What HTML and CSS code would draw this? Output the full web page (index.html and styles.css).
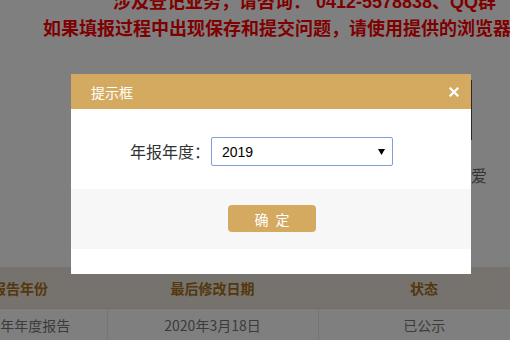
FILE: index.html
```html
<!DOCTYPE html>
<html lang="zh-CN">
<head>
<meta charset="utf-8">
<title>年报</title>
<link rel="stylesheet" href="styles.css">
</head>
<body>
<div class="page">
  <div class="notice">
    <p class="notice-line line-1">涉及登记业务，请咨询： 0412-5578838、QQ群</p>
    <p class="notice-line line-2">如果填报过程中出现保存和提交问题，请使用提供的浏览器</p>
  </div>
  <div class="middle">
    <div class="frame"></div>
    <p class="tagline">热爱</p>
  </div>
  <table class="report-table">
    <colgroup>
      <col class="col-year">
      <col class="col-date">
      <col class="col-state">
    </colgroup>
    <thead>
      <tr><th>报告年份</th><th>最后修改日期</th><th>状态</th></tr>
    </thead>
    <tbody>
      <tr><td>2019年年度报告</td><td>2020年3月18日</td><td>已公示</td></tr>
    </tbody>
  </table>
</div>

<div class="overlay"></div>

<div class="dialog">
  <div class="dialog-header">
    <span class="dialog-title">提示框</span>
    <span class="dialog-close">
      <svg width="10" height="10" viewBox="0 0 10 10"><path d="M1.5 1.5 L8.5 8.5 M8.5 1.5 L1.5 8.5" stroke="#fff" stroke-width="2.2" stroke-linecap="square"/></svg>
    </span>
  </div>
  <div class="dialog-body">
    <label class="field-label" for="year">年报年度：</label>
    <span class="select-wrap">
      <select id="year" class="year-select">
        <option>2019</option>
      </select>
      <svg class="select-arrow" width="7" height="6" viewBox="0 0 7 6"><path d="M0 0 H7 L3.5 6 Z" fill="#000"/></svg>
    </span>
  </div>
  <div class="dialog-footer">
    <button class="btn-ok">确 定</button>
  </div>
</div>
</body>
</html>
```

FILE: styles.css
```css
html, body {
  margin: 0;
  padding: 0;
  background: #ffffff;
  overflow: hidden;
}
body {
  width: 510px;
  height: 340px;
  font-family: "Liberation Sans", "Noto Sans CJK SC", sans-serif;
}
.page {
  width: 510px;
  height: 340px;
  overflow: hidden;
}
.notice {
  margin-top: -11px;
}
.notice-line {
  margin: 0;
  white-space: nowrap;
  font-size: 18px;
  line-height: 27px;
  font-weight: bold;
  color: #ff0000;
  font-family: "Liberation Sans", "Noto Sans CJK SC", sans-serif;
}
.line-1 { padding-left: 113px; }
.line-2 { padding-left: 43px; }

.middle {
  height: 224px;
  padding-top: 37px;
  box-sizing: border-box;
}
.frame {
  width: 472px;
  height: 60px;
  border-right: 1px solid #555;
  box-sizing: border-box;
}
.tagline {
  margin: 25px 0 0;
  padding-left: 455px;
  font-size: 16px;
  line-height: 20px;
  color: #666;
  white-space: nowrap;
  font-family: "Noto Sans CJK SC", sans-serif;
}

.report-table {
  margin-left: -67px;
  width: 597px;
  table-layout: fixed;
  border-collapse: collapse;
  font-family: "Noto Sans CJK SC", sans-serif;
}
.col-year { width: 174px; }
.col-date { width: 211px; }
.col-state { width: 212px; }
.report-table th {
  height: 41px;
  padding: 0;
  background: #ece6de;
  color: #a86e18;
  font-size: 14px;
  font-weight: bold;
  border-bottom: 1px solid #e4ddd3;
}
.report-table td {
  height: 31px;
  padding: 0;
  text-align: center;
  font-size: 14px;
  color: #777;
  border-right: 1px solid #e8e8e8;
}
.report-table td:last-child { border-right: none; }

.overlay {
  position: fixed;
  inset: 0;
  background: rgba(0, 0, 0, 0.5);
}

.dialog {
  position: fixed;
  left: 71px;
  top: 74px;
  width: 400px;
  height: 200px;
  background: #ffffff;
  font-family: "Noto Sans CJK SC", "Liberation Sans", sans-serif;
}
.dialog-header {
  height: 35px;
  background: #d4aa60;
  display: flex;
  align-items: center;
  justify-content: space-between;
  padding: 0 12px 0 20px;
  box-sizing: border-box;
}
.dialog-title {
  color: #fff;
  font-size: 14px;
  line-height: 20px;
}
.dialog-close {
  display: flex;
  width: 10px;
  height: 10px;
  margin-top: 1px;
}
.dialog-body {
  height: 80px;
  box-sizing: border-box;
  padding: 28px 0 0 59px;
  display: flex;
  align-items: flex-start;
  gap: 1px;
}
.field-label {
  width: 80px;
  height: 29px;
  line-height: 29px;
  font-size: 16px;
  color: #333;
  white-space: nowrap;
}
.select-wrap {
  position: relative;
  display: block;
  width: 182px;
  height: 29px;
}
.year-select {
  appearance: none;
  -webkit-appearance: none;
  width: 182px;
  height: 29px;
  margin: 0;
  padding: 0 0 0 10px;
  border: 1px solid #7f9fd8;
  border-radius: 2px;
  background: #fff;
  font-family: "Liberation Sans", sans-serif;
  font-size: 14px;
  color: #000;
  outline: none;
  box-sizing: border-box;
}
.select-arrow {
  position: absolute;
  right: 8px;
  top: 12px;
  pointer-events: none;
}
.dialog-footer {
  height: 60px;
  background: #f7f7f7;
  padding-top: 16px;
  box-sizing: border-box;
  display: flex;
  justify-content: center;
}
.btn-ok {
  width: 88px;
  height: 27px;
  margin-left: 2px;
  padding: 0;
  border: none;
  border-radius: 4px;
  background: #d4aa60;
  color: #fff;
  font-family: "Noto Sans CJK SC", sans-serif;
  font-size: 14px;
  letter-spacing: 2px;
  text-indent: 2px;
}
```
